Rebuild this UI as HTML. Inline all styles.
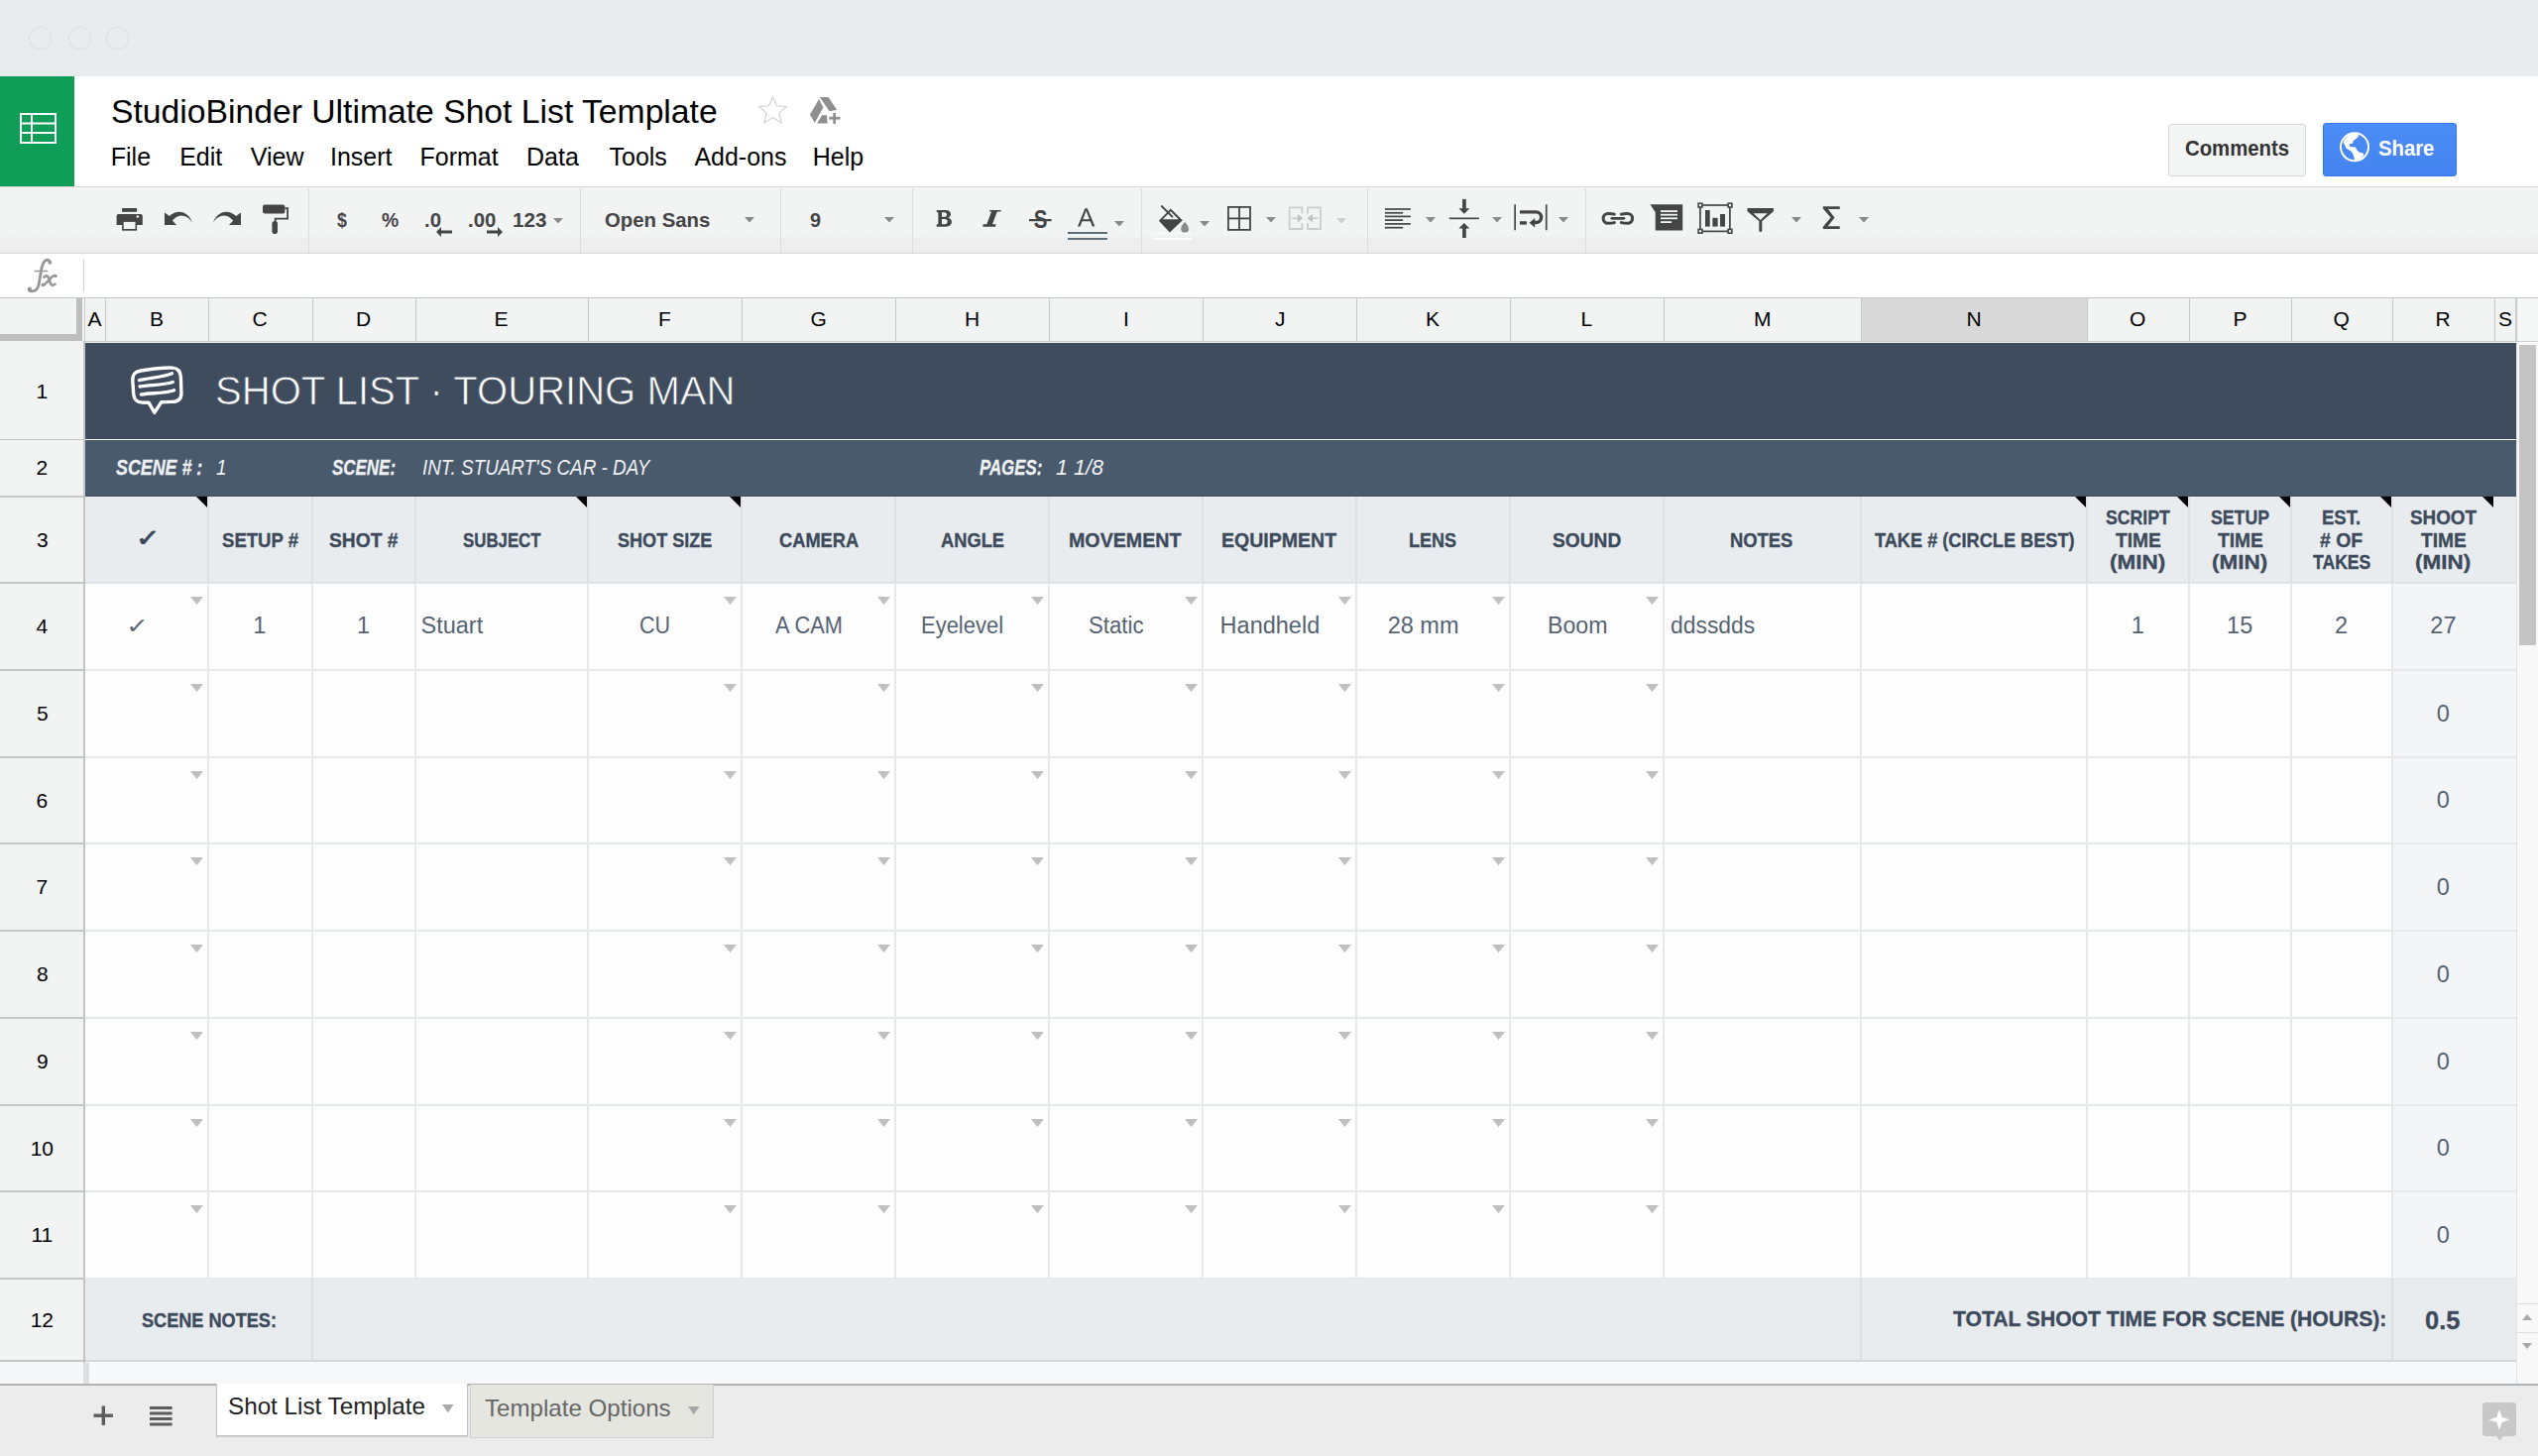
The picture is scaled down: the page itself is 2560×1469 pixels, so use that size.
<!DOCTYPE html><html><head><meta charset="utf-8"><style>*{margin:0;padding:0;box-sizing:border-box}
html,body{width:2560px;height:1469px;overflow:hidden;background:#fff}
body{position:relative;font-family:"Liberation Sans",sans-serif}
body>div,body>svg{position:absolute}
.t{white-space:nowrap;line-height:1}</style></head><body>
<div style="left:0px;top:0px;width:2560px;height:77px;background:#e9ecef"></div>
<div style="left:29px;top:27px;width:23px;height:23px;border:1px dotted #cfd3d6;border-radius:50%"></div>
<div style="left:69px;top:27px;width:23px;height:23px;border:1px dotted #cfd3d6;border-radius:50%"></div>
<div style="left:107px;top:27px;width:23px;height:23px;border:1px dotted #cfd3d6;border-radius:50%"></div>
<div style="left:0px;top:77px;width:75px;height:111px;background:#0f9d58"></div>
<svg style="left:20px;top:114px" width="37" height="31" viewBox="0 0 37 31"><g fill="none" stroke="#fff" stroke-width="2"><rect x="1" y="1" width="35" height="29"/><line x1="1" y1="10.5" x2="36" y2="10.5"/><line x1="1" y1="20" x2="36" y2="20"/><line x1="12" y1="1" x2="12" y2="30"/></g></svg>
<div class="t" style="left:112.00px;top:95.97px;font-size:33.7px;font-weight:normal;font-style:normal;color:#000;font-family:'Liberation Sans';">StudioBinder Ultimate Shot List Template</div>
<svg style="left:764px;top:96px" width="31" height="31" viewBox="0 0 24 24"><path d="M12 1.3l3.1 7 7.6.7-5.8 5 1.8 7.5L12 17.5l-6.7 4 1.8-7.5-5.8-5 7.6-.7z" fill="none" stroke="#cfcfcf" stroke-width="0.85"/></svg>
<svg style="left:816px;top:97px" width="33" height="30" viewBox="0 0 33 30"><g fill="#8f8f8f"><path d="M10.9 1.1h8.6l8.7 12.6-7.6 1.6z"/><path d="M10.1 3.1L14.4 11.4 5.7 27.1 1 18.5z"/><path d="M8.1 27.5L13.2 19.2H18L18.7 27.5z"/></g><g fill="#fff"><rect x="22.8" y="15.4" width="5.7" height="14"/><rect x="18.8" y="19.3" width="14" height="5.8"/></g><g fill="#8f8f8f"><rect x="24.3" y="16.9" width="2.7" height="11"/><rect x="20.3" y="20.8" width="11.1" height="2.8"/></g></svg>
<div class="t" style="left:111.80px;top:145.84px;font-size:25px;font-weight:normal;font-style:normal;color:#000;font-family:'Liberation Sans';">File</div>
<div class="t" style="left:181.20px;top:145.84px;font-size:25px;font-weight:normal;font-style:normal;color:#000;font-family:'Liberation Sans';">Edit</div>
<div class="t" style="left:252.80px;top:145.84px;font-size:25px;font-weight:normal;font-style:normal;color:#000;font-family:'Liberation Sans';">View</div>
<div class="t" style="left:333.00px;top:145.84px;font-size:25px;font-weight:normal;font-style:normal;color:#000;font-family:'Liberation Sans';">Insert</div>
<div class="t" style="left:423.50px;top:145.84px;font-size:25px;font-weight:normal;font-style:normal;color:#000;font-family:'Liberation Sans';">Format</div>
<div class="t" style="left:531.00px;top:145.84px;font-size:25px;font-weight:normal;font-style:normal;color:#000;font-family:'Liberation Sans';">Data</div>
<div class="t" style="left:614.50px;top:145.84px;font-size:25px;font-weight:normal;font-style:normal;color:#000;font-family:'Liberation Sans';">Tools</div>
<div class="t" style="left:700.40px;top:145.84px;font-size:25px;font-weight:normal;font-style:normal;color:#000;font-family:'Liberation Sans';">Add-ons</div>
<div class="t" style="left:819.70px;top:145.84px;font-size:25px;font-weight:normal;font-style:normal;color:#000;font-family:'Liberation Sans';">Help</div>
<div style="left:2187px;top:125px;width:139px;height:53px;background:#f3f4f4;border:1px solid #d6d6d6;border-radius:3px"></div>
<div class="t" style="left:2204.30px;top:138.75px;font-size:22.5px;font-weight:bold;font-style:normal;color:#333;font-family:'Liberation Sans';transform:scaleX(0.9036);transform-origin:0 0;">Comments</div>
<div style="left:2343px;top:124px;width:135px;height:54px;background:linear-gradient(#4b8cf6,#4584f0);border:1px solid #3079ed;border-radius:3px"></div>
<svg style="left:2360px;top:133px" width="30" height="31" viewBox="0 0 30 31"><circle cx="15" cy="15.3" r="14" fill="none" stroke="#fff" stroke-width="2"/><path d="M3.6 10.2 C5.5 5.5 10 2 15 1.6 C16.5 1.6 18 1.8 19.1 2.6 L18.3 5.5 L16 7.5 L13.5 9 L13.3 11.5 L10 12.2 L10 14.9 L15.8 15.6 L17.5 18.6 L19.5 20.4 L23.5 21.4 L24.4 23.6 C22 27 18.5 29.5 15.2 30 L14.9 27.6 L13.5 22.7 L11.9 19.9 L6.5 16.6 Z" fill="#fff"/></svg>
<div class="t" style="left:2399.30px;top:139.12px;font-size:22.3px;font-weight:bold;font-style:normal;color:#fff;font-family:'Liberation Sans';transform:scaleX(0.9095);transform-origin:0 0;">Share</div>
<div style="left:0px;top:188px;width:2560px;height:1px;background:#d8d8d8"></div>
<div style="left:0px;top:189px;width:2560px;height:66px;background:#f2f3f3"></div>
<div style="left:0px;top:240px;width:2560px;height:15px;background:#eeeeee"></div>
<div style="left:0px;top:238px;width:2560px;height:2px;background:repeating-linear-gradient(90deg,#f2f3f3 0 3px,#ececec 3px 5px);opacity:.8"></div>
<div style="left:0px;top:255px;width:2560px;height:1px;background:#d6d6d6"></div>
<div style="left:311px;top:190px;width:1px;height:65px;background:#dcdcdc"></div>
<div style="left:585px;top:190px;width:1px;height:65px;background:#dcdcdc"></div>
<div style="left:787px;top:190px;width:1px;height:65px;background:#dcdcdc"></div>
<div style="left:920px;top:190px;width:1px;height:65px;background:#dcdcdc"></div>
<div style="left:1151px;top:190px;width:1px;height:65px;background:#dcdcdc"></div>
<div style="left:1379px;top:190px;width:1px;height:65px;background:#dcdcdc"></div>
<div style="left:1599px;top:190px;width:1px;height:65px;background:#dcdcdc"></div>
<svg style="left:117px;top:209px" width="28" height="25" viewBox="0 0 28 25"><g fill="#454545"><rect x="6.1" y="1" width="15" height="3.8"/><path d="M2.6 6.9h22.2a2 2 0 0 1 2 2v9H0.6v-9a2 2 0 0 1 2-2z"/><rect x="6.1" y="13.2" width="15" height="10.5"/></g><rect x="7.7" y="14.9" width="11.8" height="7.1" fill="#f2f3f3"/><circle cx="21.9" cy="9.5" r="1.3" fill="#f2f3f3"/></svg>
<svg style="left:166px;top:213px" width="29" height="14" viewBox="0 0 29 14"><path d="M0 1.5V14h12L7.8 9.6C10.3 6.6 13.2 4.6 16.7 4.4c4.6-.1 9 2.8 11.3 7.3C25.8 5 20.5 0.8 15 0.8 11 0.8 7.5 2.5 4.9 5z" fill="#454545"/></svg>
<svg style="left:214px;top:213px" width="29" height="14" viewBox="0 0 29 14"><g transform="translate(29,0) scale(-1,1)"><path d="M0 1.5V14h12L7.8 9.6C10.3 6.6 13.2 4.6 16.7 4.4c4.6-.1 9 2.8 11.3 7.3C25.8 5 20.5 0.8 15 0.8 11 0.8 7.5 2.5 4.9 5z" fill="#454545"/></g></svg>
<svg style="left:265px;top:206px" width="28" height="31" viewBox="0 0 28 31"><g fill="#454545"><rect x="0" y="0.4" width="22.4" height="9.2" rx="2"/><path d="M22.4 3.2h3.6v12.4H13.6v2.2h-1.8v-4h12.4V5h-1.8z"/><rect x="9.4" y="17" width="5.6" height="13" rx="2.8"/></g></svg>
<div class="t" style="left:339.50px;top:211.02px;font-size:21px;font-weight:bold;font-style:normal;color:#454545;font-family:'Liberation Sans';transform:scaleX(0.8500);transform-origin:0 0;">$</div>
<div class="t" style="left:384.50px;top:211.02px;font-size:21px;font-weight:bold;font-style:normal;color:#454545;font-family:'Liberation Sans';transform:scaleX(0.9211);transform-origin:0 0;">%</div>
<div class="t" style="left:427.63px;top:211.02px;font-size:21px;font-weight:bold;font-style:normal;color:#454545;font-family:'Liberation Sans';transform:scaleX(0.9726);transform-origin:0 0;">.0</div>
<svg style="left:440px;top:229px" width="16" height="10" viewBox="0 0 16 10"><path d="M0 5L5 0v3.6h11v2.8H5V10z" fill="#454545"/></svg>
<div class="t" style="left:472.23px;top:211.02px;font-size:21px;font-weight:bold;font-style:normal;color:#454545;font-family:'Liberation Sans';transform:scaleX(0.9668);transform-origin:0 0;">.00</div>
<svg style="left:491px;top:229px" width="16" height="10" viewBox="0 0 16 10"><path d="M16 5L11 0v3.6H0v2.8h11V10z" fill="#454545"/></svg>
<div class="t" style="left:517.32px;top:211.02px;font-size:21px;font-weight:bold;font-style:normal;color:#454545;font-family:'Liberation Sans';transform:scaleX(0.9803);transform-origin:0 0;">123</div>
<svg style="left:558.2px;top:219.6px" width="10" height="5.6" viewBox="0 0 10 5.6"><path d="M0 0h10L5 5.6z" fill="#8a8a8a"/></svg>
<div class="t" style="left:610.20px;top:210.82px;font-size:21px;font-weight:bold;font-style:normal;color:#454545;font-family:'Liberation Sans';transform:scaleX(0.9687);transform-origin:0 0;">Open Sans</div>
<svg style="left:750.6px;top:219.4px" width="10" height="5.6" viewBox="0 0 10 5.6"><path d="M0 0h10L5 5.6z" fill="#8a8a8a"/></svg>
<div class="t" style="left:817.20px;top:210.82px;font-size:21px;font-weight:bold;font-style:normal;color:#454545;font-family:'Liberation Sans';transform:scaleX(0.9455);transform-origin:0 0;">9</div>
<svg style="left:892.3px;top:219.4px" width="10" height="5.6" viewBox="0 0 10 5.6"><path d="M0 0h10L5 5.6z" fill="#8a8a8a"/></svg>
<svg style="left:944px;top:211px" width="17" height="19" viewBox="0 0 17 19"><path d="M0.8 0.9h8.6c3.6 0 5.6 1.5 5.6 4.2 0 1.8-1 3-2.6 3.6 2.1.5 3.5 1.9 3.5 4.1 0 3-2.3 4.9-6.2 4.9H0.8v-2.4h1.6V3.3H0.8z M6 3.3v4.5h2.6c1.5 0 2.4-.8 2.4-2.3 0-1.4-.9-2.2-2.4-2.2z M6 10.1v5.1h3c1.7 0 2.7-.9 2.7-2.6 0-1.6-1-2.5-2.7-2.5z" fill="#454545" fill-rule="evenodd"/></svg>
<svg style="left:991px;top:211px" width="20" height="19" viewBox="0 0 20 19"><path d="M7.4 0.9h11.3l-.4 1.7h-3.5L10 15.3h3.5l-.4 2.5H0.3l.4-2.5h3.6L9.1 2.6H7z" fill="#454545"/></svg>
<svg style="left:1038px;top:210px" width="24" height="23" viewBox="0 0 24 23"><text x="11.6" y="20" font-family="Liberation Sans" font-weight="bold" font-size="25" fill="#454545" text-anchor="middle" transform="translate(11.6,0) scale(0.82,1) translate(-11.6,0)">S</text><rect x="0" y="11" width="22.6" height="2.2" fill="#454545"/></svg>
<svg style="left:1086px;top:210px" width="20" height="19" viewBox="0 0 20 19"><path d="M1 18.6L8.4 0.2h2.4l7.6 18.4h-2.6l-2.1-5.3H5.5l-2 5.3z M6.3 11.2h6.6L9.6 2.8z" fill="#454545" fill-rule="evenodd"/></svg>
<div style="left:1077px;top:234.4px;width:39.5px;height:1.8px;background:#5f6e7c"></div>
<div style="left:1077px;top:240px;width:39.5px;height:1.8px;background:#5f6e7c"></div>
<svg style="left:1123.9px;top:223.2px" width="10" height="5.6" viewBox="0 0 10 5.6"><path d="M0 0h10L5 5.6z" fill="#8a8a8a"/></svg>
<svg style="left:1163px;top:207px" width="40" height="36" viewBox="0 0 40 36"><g fill="#454545"><path d="M8.9 1.1L19.4 11.6" stroke="#454545" stroke-width="2" stroke-linecap="round"/><path d="M17.8 3.4L29.8 15.3 16.9 27.6 5.9 15.7z M17.8 6.3L25.8 14.3H9.8z" fill-rule="evenodd"/></g><path d="M32.1 16.8c0 0-3.9 4.3-3.9 6.9a3.9 3.9 0 0 0 7.8 0c0-2.6-3.9-6.9-3.9-6.9z" fill="#8a8a8a"/><rect x="0.4" y="27.9" width="38.6" height="0.9" fill="#fff"/><rect x="0.4" y="33" width="38.6" height="1.8" fill="#fff"/></svg>
<svg style="left:1209.8px;top:223.2px" width="10" height="5.6" viewBox="0 0 10 5.6"><path d="M0 0h10L5 5.6z" fill="#8a8a8a"/></svg>
<svg style="left:1238px;top:208px" width="24" height="25" viewBox="0 0 24 25"><g fill="none" stroke="#454545" stroke-width="1.8"><rect x="0.9" y="0.9" width="22.1" height="23"/><line x1="12" y1="0.9" x2="12" y2="23.9"/><line x1="0.9" y1="12.4" x2="23" y2="12.4"/></g></svg>
<svg style="left:1277px;top:219.3px" width="10" height="5.6" viewBox="0 0 10 5.6"><path d="M0 0h10L5 5.6z" fill="#8a8a8a"/></svg>
<svg style="left:1299px;top:208px" width="35" height="25" viewBox="0 0 35 25"><g fill="none" stroke="#cdcdcd" stroke-width="1.8"><path d="M14.4 7.5V1.3H1.7V23H14.4V17.2"/><path d="M20.1 7.5V1.3H33V23H20.1V17.2"/></g><g fill="#c0c0c0"><rect x="4.2" y="11.6" width="6" height="1.3"/><path d="M9.9 7.9L15.1 12.2 9.9 16.6z"/><rect x="24.6" y="11.6" width="5.7" height="1.3"/><path d="M24.9 7.9L19.7 12.2 24.9 16.6z"/></g></svg>
<svg style="left:1348px;top:219.7px" width="10" height="5.6" viewBox="0 0 10 5.6"><path d="M0 0h10L5 5.6z" fill="#cfcfcf"/></svg>
<svg style="left:1396px;top:209px" width="28" height="23" viewBox="0 0 28 23"><g fill="#454545"><rect x="0.9" y="1.15" width="26" height="1.7"/><rect x="0.9" y="4.95" width="18.2" height="1.7"/><rect x="0.9" y="8.55" width="26" height="1.7"/><rect x="0.9" y="12.25" width="18.2" height="1.7"/><rect x="0.9" y="16.05" width="26" height="1.7"/><rect x="0.9" y="19.85" width="18.2" height="1.7"/></g></svg>
<svg style="left:1437.6px;top:219.3px" width="10" height="5.6" viewBox="0 0 10 5.6"><path d="M0 0h10L5 5.6z" fill="#8a8a8a"/></svg>
<svg style="left:1461px;top:200px" width="32" height="41" viewBox="0 0 32 41"><g fill="#454545"><rect x="0.9" y="19.5" width="29.9" height="1.7"/><rect x="14.1" y="0.9" width="3.7" height="10"/><path d="M10.4 10.2h11l-5.5 5.6z"/><rect x="14.1" y="30" width="3.7" height="10"/><path d="M10.4 30.5h11l-5.5-5.6z"/></g></svg>
<svg style="left:1504.8px;top:219.3px" width="10" height="5.6" viewBox="0 0 10 5.6"><path d="M0 0h10L5 5.6z" fill="#8a8a8a"/></svg>
<svg style="left:1527px;top:206px" width="35" height="27" viewBox="0 0 35 27"><g fill="#454545"><rect x="0.3" y="0.3" width="1.7" height="26"/><rect x="31.9" y="0.3" width="1.7" height="26"/><rect x="6" y="17.2" width="6.9" height="3.4"/><path d="M6 6.2h16.3a7 7 0 0 1 0 14H21v-3.4h1.3a3.6 3.6 0 0 0 0-7.2H6z"/><path d="M15.5 18.8L21.2 14v9.6z"/></g></svg>
<svg style="left:1572px;top:219.3px" width="10" height="5.6" viewBox="0 0 10 5.6"><path d="M0 0h10L5 5.6z" fill="#8a8a8a"/></svg>
<svg style="left:1614px;top:213px" width="36" height="15" viewBox="0 0 36 15"><g fill="none" stroke="#454545" stroke-width="3.1" stroke-linecap="round"><path d="M14.3 3.1C12.8 2.6 11 2.45 8 2.45A4.9 4.9 0 0 0 8 12.25C11 12.25 12.8 12.1 14.3 11.6"/><path d="M21.4 3.1C22.9 2.6 24.7 2.45 27.7 2.45A4.9 4.9 0 0 1 27.7 12.25C24.7 12.25 22.9 12.1 21.4 11.6"/></g><rect x="10.4" y="6" width="14.9" height="2.7" rx="1.35" fill="#454545"/></svg>
<svg style="left:1664px;top:206px" width="34" height="27" viewBox="0 0 34 27"><path d="M0.4 0.2h32.8v26.4H5.7V8z" fill="#454545"/><g fill="#f2f3f3"><rect x="11" y="6.2" width="17" height="1.8"/><rect x="11" y="9.8" width="17" height="1.8"/><rect x="11" y="13.4" width="17" height="1.8"/><rect x="11" y="17.2" width="11" height="1.8"/></g></svg>
<svg style="left:1712px;top:204px" width="37" height="33" viewBox="0 0 37 33"><g fill="none" stroke="#454545" stroke-width="1.7"><rect x="2.9" y="3" width="30" height="26.4"/></g><g fill="#454545"><rect x="0.3" y="0.4" width="5.4" height="5.4"/><rect x="30.3" y="0.4" width="5.4" height="5.4"/><rect x="0.3" y="26.6" width="5.4" height="5.4"/><rect x="30.3" y="26.6" width="5.4" height="5.4"/><rect x="8" y="8" width="4.7" height="16.6"/><rect x="15.4" y="15.8" width="5.2" height="8.8"/><rect x="23" y="12" width="5" height="12.6"/></g><g fill="#f2f3f3"><rect x="1.9" y="2" width="2.2" height="2.2"/><rect x="31.9" y="2" width="2.2" height="2.2"/><rect x="1.9" y="28.2" width="2.2" height="2.2"/><rect x="31.9" y="28.2" width="2.2" height="2.2"/></g></svg>
<svg style="left:1762px;top:210px" width="28" height="24" viewBox="0 0 28 24"><path d="M0.5 0.1h26.4v3.2L15.3 13v9.4a1.5 1.5 0 0 1-3 0V13L0.5 3.3z M6.6 5.2l7.1 6.7 7.1-6.7z" fill="#454545" fill-rule="evenodd"/></svg>
<svg style="left:1807.4px;top:219.2px" width="10" height="5.6" viewBox="0 0 10 5.6"><path d="M0 0h10L5 5.6z" fill="#8a8a8a"/></svg>
<svg style="left:1838px;top:208px" width="19" height="23" viewBox="0 0 19 23"><path d="M0.8 0.2h16.9v2.8H5.9l6.6 8.4-6.8 8.8h12v2.8H0.8v-2.2l7.8-9.4L0.8 2.4z" fill="#454545"/></svg>
<svg style="left:1874.8px;top:219.2px" width="10" height="5.6" viewBox="0 0 10 5.6"><path d="M0 0h10L5 5.6z" fill="#8a8a8a"/></svg>
<svg style="left:20px;top:256px" width="40" height="44" viewBox="0 0 40 44"><g fill="none" stroke="#979797" stroke-linecap="round"><path stroke-width="2.8" d="M30.6 8.6C30.2 6.4 28.2 5.8 26.3 6.6 23.3 7.9 22.3 12.2 21.4 17.5L19.3 30.2C18.4 35 15.8 37.9 12.2 37.9 9.8 37.9 8.7 36.6 9.3 35.6"/><path stroke-width="1.5" d="M15.2 17.6H27.6"/><path stroke-width="2.6" d="M24.4 23.6C26.4 21.8 28.2 22.1 28.9 24L31 30.1C31.6 32 33.6 32.4 35.6 30.6"/><path stroke-width="2.4" d="M36.3 22.3C34.9 21.6 33.5 22.2 32.1 23.6L25.6 30.6C24.6 31.8 23.7 32 23 31.5"/></g><g fill="#979797"><circle cx="30.3" cy="8.8" r="1.9"/><circle cx="9.9" cy="35.6" r="2.1"/><circle cx="36" cy="22.4" r="1.6"/><circle cx="23.3" cy="31.2" r="1.7"/></g></svg>
<div style="left:84px;top:262px;width:1px;height:32px;background:#cfcfcf"></div>
<div style="left:0px;top:300px;width:2560px;height:1px;background:#c6c6c6"></div>
<div style="left:0px;top:301px;width:2538px;height:44px;background:#f2f3f3"></div>
<div style="left:2538px;top:301px;width:22px;height:44px;background:#f5f6f6"></div>
<div style="left:2538px;top:344px;width:22px;height:1px;background:#d0d0d0"></div>
<div style="left:2536.5px;top:301px;width:2px;height:44px;background:#cfcfcf"></div>
<div style="left:1877px;top:301px;width:228px;height:44px;background:#d9d9d9"></div>
<div style="left:105.5px;top:301px;width:1px;height:44px;background:#c8c8c8"></div>
<div class="t" style="left:88.50px;top:311.32px;font-size:21px;font-weight:normal;font-style:normal;color:#000;font-family:'Liberation Sans';">A</div>
<div style="left:209.5px;top:301px;width:1px;height:44px;background:#c8c8c8"></div>
<div class="t" style="left:151.00px;top:311.32px;font-size:21px;font-weight:normal;font-style:normal;color:#000;font-family:'Liberation Sans';">B</div>
<div style="left:314.5px;top:301px;width:1px;height:44px;background:#c8c8c8"></div>
<div class="t" style="left:254.50px;top:311.32px;font-size:21px;font-weight:normal;font-style:normal;color:#000;font-family:'Liberation Sans';">C</div>
<div style="left:418.5px;top:301px;width:1px;height:44px;background:#c8c8c8"></div>
<div class="t" style="left:359.00px;top:311.32px;font-size:21px;font-weight:normal;font-style:normal;color:#000;font-family:'Liberation Sans';">D</div>
<div style="left:592.5px;top:301px;width:1px;height:44px;background:#c8c8c8"></div>
<div class="t" style="left:498.50px;top:311.32px;font-size:21px;font-weight:normal;font-style:normal;color:#000;font-family:'Liberation Sans';">E</div>
<div style="left:747.5px;top:301px;width:1px;height:44px;background:#c8c8c8"></div>
<div class="t" style="left:664.00px;top:311.32px;font-size:21px;font-weight:normal;font-style:normal;color:#000;font-family:'Liberation Sans';">F</div>
<div style="left:902.5px;top:301px;width:1px;height:44px;background:#c8c8c8"></div>
<div class="t" style="left:817.50px;top:311.32px;font-size:21px;font-weight:normal;font-style:normal;color:#000;font-family:'Liberation Sans';">G</div>
<div style="left:1057.5px;top:301px;width:1px;height:44px;background:#c8c8c8"></div>
<div class="t" style="left:973.00px;top:311.32px;font-size:21px;font-weight:normal;font-style:normal;color:#000;font-family:'Liberation Sans';">H</div>
<div style="left:1212.5px;top:301px;width:1px;height:44px;background:#c8c8c8"></div>
<div class="t" style="left:1133.00px;top:311.32px;font-size:21px;font-weight:normal;font-style:normal;color:#000;font-family:'Liberation Sans';">I</div>
<div style="left:1367.5px;top:301px;width:1px;height:44px;background:#c8c8c8"></div>
<div class="t" style="left:1286.00px;top:311.32px;font-size:21px;font-weight:normal;font-style:normal;color:#000;font-family:'Liberation Sans';">J</div>
<div style="left:1522.5px;top:301px;width:1px;height:44px;background:#c8c8c8"></div>
<div class="t" style="left:1438.00px;top:311.32px;font-size:21px;font-weight:normal;font-style:normal;color:#000;font-family:'Liberation Sans';">K</div>
<div style="left:1677.5px;top:301px;width:1px;height:44px;background:#c8c8c8"></div>
<div class="t" style="left:1594.50px;top:311.32px;font-size:21px;font-weight:normal;font-style:normal;color:#000;font-family:'Liberation Sans';">L</div>
<div style="left:1876.5px;top:301px;width:1px;height:44px;background:#c8c8c8"></div>
<div class="t" style="left:1769.00px;top:311.32px;font-size:21px;font-weight:normal;font-style:normal;color:#000;font-family:'Liberation Sans';">M</div>
<div style="left:2104.5px;top:301px;width:1px;height:44px;background:#c8c8c8"></div>
<div class="t" style="left:1983.50px;top:311.32px;font-size:21px;font-weight:normal;font-style:normal;color:#000;font-family:'Liberation Sans';">N</div>
<div style="left:2207.5px;top:301px;width:1px;height:44px;background:#c8c8c8"></div>
<div class="t" style="left:2148.00px;top:311.32px;font-size:21px;font-weight:normal;font-style:normal;color:#000;font-family:'Liberation Sans';">O</div>
<div style="left:2310.5px;top:301px;width:1px;height:44px;background:#c8c8c8"></div>
<div class="t" style="left:2252.50px;top:311.32px;font-size:21px;font-weight:normal;font-style:normal;color:#000;font-family:'Liberation Sans';">P</div>
<div style="left:2412.5px;top:301px;width:1px;height:44px;background:#c8c8c8"></div>
<div class="t" style="left:2353.50px;top:311.32px;font-size:21px;font-weight:normal;font-style:normal;color:#000;font-family:'Liberation Sans';">Q</div>
<div style="left:2515.5px;top:301px;width:1px;height:44px;background:#c8c8c8"></div>
<div class="t" style="left:2456.50px;top:311.32px;font-size:21px;font-weight:normal;font-style:normal;color:#000;font-family:'Liberation Sans';">R</div>
<div style="left:2537.5px;top:301px;width:1px;height:44px;background:#c8c8c8"></div>
<div class="t" style="left:2520.00px;top:311.32px;font-size:21px;font-weight:normal;font-style:normal;color:#000;font-family:'Liberation Sans';">S</div>
<div style="left:84.5px;top:301px;width:1px;height:44px;background:#c8c8c8"></div>
<div style="left:0px;top:301px;width:77px;height:36px;background:#f2f3f3"></div>
<div style="left:77px;top:301px;width:6px;height:43px;background:#bebebe"></div>
<div style="left:0px;top:337px;width:83px;height:7px;background:#bebebe"></div>
<div style="left:0px;top:344px;width:2538px;height:1px;background:#c8c8c8"></div>
<div style="left:85px;top:345px;width:2453px;height:1px;background:#f4f4f4"></div>
<div style="left:0px;top:344px;width:85px;height:1052px;background:#f2f3f3"></div>
<div style="left:84px;top:344px;width:1.5px;height:1052px;background:#c4c4c4"></div>
<div style="left:0px;top:442.5px;width:84px;height:1.5px;background:#c6c6c6"></div>
<div class="t" style="left:36.50px;top:383.97px;font-size:21px;font-weight:normal;font-style:normal;color:#000;font-family:'Liberation Sans';">1</div>
<div style="left:0px;top:500px;width:84px;height:1.5px;background:#c6c6c6"></div>
<div class="t" style="left:36.50px;top:461.47px;font-size:21px;font-weight:normal;font-style:normal;color:#000;font-family:'Liberation Sans';">2</div>
<div style="left:0px;top:587px;width:84px;height:1.5px;background:#c6c6c6"></div>
<div class="t" style="left:37.00px;top:533.72px;font-size:21px;font-weight:normal;font-style:normal;color:#000;font-family:'Liberation Sans';">3</div>
<div style="left:0px;top:675px;width:84px;height:1.5px;background:#c6c6c6"></div>
<div class="t" style="left:36.50px;top:621.22px;font-size:21px;font-weight:normal;font-style:normal;color:#000;font-family:'Liberation Sans';">4</div>
<div style="left:0px;top:763px;width:84px;height:1.5px;background:#c6c6c6"></div>
<div class="t" style="left:37.00px;top:709.22px;font-size:21px;font-weight:normal;font-style:normal;color:#000;font-family:'Liberation Sans';">5</div>
<div style="left:0px;top:850px;width:84px;height:1.5px;background:#c6c6c6"></div>
<div class="t" style="left:36.50px;top:796.72px;font-size:21px;font-weight:normal;font-style:normal;color:#000;font-family:'Liberation Sans';">6</div>
<div style="left:0px;top:938px;width:84px;height:1.5px;background:#c6c6c6"></div>
<div class="t" style="left:36.50px;top:884.22px;font-size:21px;font-weight:normal;font-style:normal;color:#000;font-family:'Liberation Sans';">7</div>
<div style="left:0px;top:1026px;width:84px;height:1.5px;background:#c6c6c6"></div>
<div class="t" style="left:37.00px;top:972.22px;font-size:21px;font-weight:normal;font-style:normal;color:#000;font-family:'Liberation Sans';">8</div>
<div style="left:0px;top:1114px;width:84px;height:1.5px;background:#c6c6c6"></div>
<div class="t" style="left:37.00px;top:1060.22px;font-size:21px;font-weight:normal;font-style:normal;color:#000;font-family:'Liberation Sans';">9</div>
<div style="left:0px;top:1201px;width:84px;height:1.5px;background:#c6c6c6"></div>
<div class="t" style="left:30.66px;top:1147.72px;font-size:21px;font-weight:normal;font-style:normal;color:#000;font-family:'Liberation Sans';">10</div>
<div style="left:0px;top:1289px;width:84px;height:1.5px;background:#c6c6c6"></div>
<div class="t" style="left:31.44px;top:1235.22px;font-size:21px;font-weight:normal;font-style:normal;color:#000;font-family:'Liberation Sans';">11</div>
<div style="left:0px;top:1372px;width:84px;height:1.5px;background:#c6c6c6"></div>
<div class="t" style="left:30.66px;top:1320.72px;font-size:21px;font-weight:normal;font-style:normal;color:#000;font-family:'Liberation Sans';">12</div>
<div style="left:85.5px;top:346px;width:2452.5px;height:97px;background:#3e4c5d"></div>
<div style="left:85.5px;top:443.7px;width:2452.5px;height:57.3px;background:#4a5a6d"></div>
<div style="left:85.5px;top:500px;width:2452.5px;height:1px;background:#3f4b5a"></div>
<svg style="left:120px;top:355px" width="80" height="70" viewBox="0 0 80 70"><g fill="none" stroke="#fff" stroke-linejoin="round" stroke-linecap="round"><path stroke-width="3.4" d="M22 19C33 17.2 44 15.8 54 16.1 59.5 16.4 62 19.4 62.4 25.5L62.9 42C63 47.6 59.6 50.2 53.5 50.4L42.6 50.8 35.8 61.4 30 51.2 23.5 51.1C17.5 51 15.2 47.6 14.7 42.6L13.8 29C13.5 22.5 16 20 22 19Z"/><path stroke-width="3.3" d="M20.4 28.6C31.5 26 44 25.8 53.5 21.8"/><path stroke-width="3.3" d="M21 35C32.5 33.2 45 33.6 54.3 30.5"/><path stroke-width="3.3" d="M22.4 43C34 41.2 46 42.2 55.6 38.7"/></g></svg>
<div class="t" style="left:217.02px;top:373.59px;font-size:41px;font-weight:normal;font-style:normal;color:#ffffff;font-family:'Liberation Sans';transform:scaleX(0.9767);transform-origin:0 0;-webkit-text-stroke:0.75px #3e4c5d">SHOT LIST &middot; TOURING MAN</div>
<div class="t" style="left:117.00px;top:460.88px;font-size:22px;font-weight:bold;font-style:italic;color:#f0f1f3;font-family:'Liberation Sans';transform:scaleX(0.8111);transform-origin:0 0;-webkit-text-stroke:0.3px #f0f1f3">SCENE # :</div>
<div class="t" style="left:218.20px;top:460.88px;font-size:22px;font-weight:normal;font-style:italic;color:#f0f1f3;font-family:'Liberation Sans';transform:scaleX(0.8636);transform-origin:0 0;">1</div>
<div class="t" style="left:335.20px;top:460.88px;font-size:22px;font-weight:bold;font-style:italic;color:#f0f1f3;font-family:'Liberation Sans';transform:scaleX(0.7706);transform-origin:0 0;-webkit-text-stroke:0.3px #f0f1f3">SCENE:</div>
<div class="t" style="left:426.20px;top:460.88px;font-size:22px;font-weight:normal;font-style:italic;color:#f0f1f3;font-family:'Liberation Sans';transform:scaleX(0.8564);transform-origin:0 0;">INT. STUART&#39;S CAR - DAY</div>
<div class="t" style="left:987.80px;top:460.88px;font-size:22px;font-weight:bold;font-style:italic;color:#f0f1f3;font-family:'Liberation Sans';transform:scaleX(0.7647);transform-origin:0 0;-webkit-text-stroke:0.3px #f0f1f3">PAGES:</div>
<div class="t" style="left:1065.00px;top:460.88px;font-size:22px;font-weight:normal;font-style:italic;color:#f0f1f3;font-family:'Liberation Sans';transform:scaleX(0.9820);transform-origin:0 0;">1 1/8</div>
<div style="left:85.5px;top:501px;width:2452.5px;height:87px;background:#e9ecef"></div>
<div style="left:85.5px;top:588px;width:2452.5px;height:702px;background:#fefefe"></div>
<div style="left:2413px;top:588px;width:125px;height:702px;background:#f4f5f7"></div>
<div style="left:85.5px;top:1290px;width:2452.5px;height:83px;background:#e9ecef"></div>
<div style="left:85.5px;top:1373px;width:2452.5px;height:23px;background:#f7f8fa"></div>
<div style="left:209px;top:501px;width:2px;height:87px;background:#dde1e5"></div>
<div style="left:209px;top:588px;width:2px;height:702px;background:#e6e9ec"></div>
<div style="left:314px;top:501px;width:2px;height:87px;background:#dde1e5"></div>
<div style="left:314px;top:588px;width:2px;height:702px;background:#e6e9ec"></div>
<div style="left:418px;top:501px;width:2px;height:87px;background:#dde1e5"></div>
<div style="left:418px;top:588px;width:2px;height:702px;background:#e6e9ec"></div>
<div style="left:592px;top:501px;width:2px;height:87px;background:#dde1e5"></div>
<div style="left:592px;top:588px;width:2px;height:702px;background:#e6e9ec"></div>
<div style="left:747px;top:501px;width:2px;height:87px;background:#dde1e5"></div>
<div style="left:747px;top:588px;width:2px;height:702px;background:#e6e9ec"></div>
<div style="left:902px;top:501px;width:2px;height:87px;background:#dde1e5"></div>
<div style="left:902px;top:588px;width:2px;height:702px;background:#e6e9ec"></div>
<div style="left:1057px;top:501px;width:2px;height:87px;background:#dde1e5"></div>
<div style="left:1057px;top:588px;width:2px;height:702px;background:#e6e9ec"></div>
<div style="left:1212px;top:501px;width:2px;height:87px;background:#dde1e5"></div>
<div style="left:1212px;top:588px;width:2px;height:702px;background:#e6e9ec"></div>
<div style="left:1367px;top:501px;width:2px;height:87px;background:#dde1e5"></div>
<div style="left:1367px;top:588px;width:2px;height:702px;background:#e6e9ec"></div>
<div style="left:1522px;top:501px;width:2px;height:87px;background:#dde1e5"></div>
<div style="left:1522px;top:588px;width:2px;height:702px;background:#e6e9ec"></div>
<div style="left:1677px;top:501px;width:2px;height:87px;background:#dde1e5"></div>
<div style="left:1677px;top:588px;width:2px;height:702px;background:#e6e9ec"></div>
<div style="left:1876px;top:501px;width:2px;height:87px;background:#dde1e5"></div>
<div style="left:1876px;top:588px;width:2px;height:702px;background:#e6e9ec"></div>
<div style="left:2104px;top:501px;width:2px;height:87px;background:#dde1e5"></div>
<div style="left:2104px;top:588px;width:2px;height:702px;background:#e6e9ec"></div>
<div style="left:2207px;top:501px;width:2px;height:87px;background:#dde1e5"></div>
<div style="left:2207px;top:588px;width:2px;height:702px;background:#e6e9ec"></div>
<div style="left:2310px;top:501px;width:2px;height:87px;background:#dde1e5"></div>
<div style="left:2310px;top:588px;width:2px;height:702px;background:#e6e9ec"></div>
<div style="left:2412px;top:501px;width:2px;height:87px;background:#dde1e5"></div>
<div style="left:2412px;top:588px;width:2px;height:702px;background:#e6e9ec"></div>
<div style="left:85.5px;top:587px;width:2452.5px;height:2px;background:#dfe3e7"></div>
<div style="left:85.5px;top:675px;width:2452.5px;height:2px;background:#e6e9ec"></div>
<div style="left:85.5px;top:763px;width:2452.5px;height:2px;background:#e6e9ec"></div>
<div style="left:85.5px;top:850px;width:2452.5px;height:2px;background:#e6e9ec"></div>
<div style="left:85.5px;top:938px;width:2452.5px;height:2px;background:#e6e9ec"></div>
<div style="left:85.5px;top:1026px;width:2452.5px;height:2px;background:#e6e9ec"></div>
<div style="left:85.5px;top:1114px;width:2452.5px;height:2px;background:#e6e9ec"></div>
<div style="left:85.5px;top:1201px;width:2452.5px;height:2px;background:#e6e9ec"></div>
<div style="left:85.5px;top:1289px;width:2452.5px;height:2px;background:#e6e9ec"></div>
<div style="left:85.5px;top:1372px;width:2452.5px;height:2px;background:#d3d7db"></div>
<div style="left:314px;top:1290px;width:2px;height:83px;background:#dce0e4"></div>
<div style="left:1876px;top:1290px;width:2px;height:83px;background:#dce0e4"></div>
<div style="left:2412px;top:1290px;width:2px;height:83px;background:#dce0e4"></div>
<div style="left:0px;top:1374.5px;width:84px;height:21.5px;background:#f6f7f8"></div>
<div style="left:84px;top:1374.5px;width:5.5px;height:21.5px;background:#dde0e3"></div>
<div class="t" style="left:223.65px;top:534.02px;font-size:21px;font-weight:bold;font-style:normal;color:#3c4a5b;font-family:'Liberation Sans';transform:scaleX(0.8845);transform-origin:0 0;-webkit-text-stroke:0.35px #3c4a5b">SETUP #</div>
<div class="t" style="left:332.10px;top:534.02px;font-size:21px;font-weight:bold;font-style:normal;color:#3c4a5b;font-family:'Liberation Sans';transform:scaleX(0.9164);transform-origin:0 0;-webkit-text-stroke:0.35px #3c4a5b">SHOT #</div>
<div class="t" style="left:466.65px;top:534.02px;font-size:21px;font-weight:bold;font-style:normal;color:#3c4a5b;font-family:'Liberation Sans';transform:scaleX(0.8015);transform-origin:0 0;-webkit-text-stroke:0.35px #3c4a5b">SUBJECT</div>
<div class="t" style="left:622.80px;top:534.02px;font-size:21px;font-weight:bold;font-style:normal;color:#3c4a5b;font-family:'Liberation Sans';transform:scaleX(0.8607);transform-origin:0 0;-webkit-text-stroke:0.35px #3c4a5b">SHOT SIZE</div>
<div class="t" style="left:785.50px;top:534.02px;font-size:21px;font-weight:bold;font-style:normal;color:#3c4a5b;font-family:'Liberation Sans';transform:scaleX(0.8696);transform-origin:0 0;-webkit-text-stroke:0.35px #3c4a5b">CAMERA</div>
<div class="t" style="left:948.50px;top:534.02px;font-size:21px;font-weight:bold;font-style:normal;color:#3c4a5b;font-family:'Liberation Sans';transform:scaleX(0.8708);transform-origin:0 0;-webkit-text-stroke:0.35px #3c4a5b">ANGLE</div>
<div class="t" style="left:1078.21px;top:534.02px;font-size:21px;font-weight:bold;font-style:normal;color:#3c4a5b;font-family:'Liberation Sans';transform:scaleX(0.9352);transform-origin:0 0;-webkit-text-stroke:0.35px #3c4a5b">MOVEMENT</div>
<div class="t" style="left:1231.92px;top:534.02px;font-size:21px;font-weight:bold;font-style:normal;color:#3c4a5b;font-family:'Liberation Sans';transform:scaleX(0.9297);transform-origin:0 0;-webkit-text-stroke:0.35px #3c4a5b">EQUIPMENT</div>
<div class="t" style="left:1421.04px;top:534.02px;font-size:21px;font-weight:bold;font-style:normal;color:#3c4a5b;font-family:'Liberation Sans';transform:scaleX(0.8582);transform-origin:0 0;-webkit-text-stroke:0.35px #3c4a5b">LENS</div>
<div class="t" style="left:1565.95px;top:534.02px;font-size:21px;font-weight:bold;font-style:normal;color:#3c4a5b;font-family:'Liberation Sans';transform:scaleX(0.9131);transform-origin:0 0;-webkit-text-stroke:0.35px #3c4a5b">SOUND</div>
<div class="t" style="left:1745.37px;top:534.02px;font-size:21px;font-weight:bold;font-style:normal;color:#3c4a5b;font-family:'Liberation Sans';transform:scaleX(0.8762);transform-origin:0 0;-webkit-text-stroke:0.35px #3c4a5b">NOTES</div>
<div class="t" style="left:1890.65px;top:534.02px;font-size:21px;font-weight:bold;font-style:normal;color:#3c4a5b;font-family:'Liberation Sans';transform:scaleX(0.8653);transform-origin:0 0;-webkit-text-stroke:0.35px #3c4a5b">TAKE # (CIRCLE BEST)</div>
<div class="t" style="left:137.36px;top:531.28px;font-size:24px;font-weight:bold;font-style:normal;color:#3c4a5b;font-family:'Liberation Sans';transform:scaleX(1.2143);transform-origin:0 0;">&#10003;</div>
<div class="t" style="left:2124.00px;top:511.42px;font-size:21px;font-weight:bold;font-style:normal;color:#3c4a5b;font-family:'Liberation Sans';transform:scaleX(0.8422);transform-origin:0 0;-webkit-text-stroke:0.35px #3c4a5b">SCRIPT</div>
<div class="t" style="left:2133.60px;top:533.82px;font-size:21px;font-weight:bold;font-style:normal;color:#3c4a5b;font-family:'Liberation Sans';transform:scaleX(0.9132);transform-origin:0 0;-webkit-text-stroke:0.35px #3c4a5b">TIME</div>
<div class="t" style="left:2128.43px;top:556.22px;font-size:21px;font-weight:bold;font-style:normal;color:#3c4a5b;font-family:'Liberation Sans';transform:scaleX(1.0696);transform-origin:0 0;-webkit-text-stroke:0.35px #3c4a5b">(MIN)</div>
<div class="t" style="left:2230.00px;top:511.42px;font-size:21px;font-weight:bold;font-style:normal;color:#3c4a5b;font-family:'Liberation Sans';transform:scaleX(0.8428);transform-origin:0 0;-webkit-text-stroke:0.35px #3c4a5b">SETUP</div>
<div class="t" style="left:2236.60px;top:533.82px;font-size:21px;font-weight:bold;font-style:normal;color:#3c4a5b;font-family:'Liberation Sans';transform:scaleX(0.9132);transform-origin:0 0;-webkit-text-stroke:0.35px #3c4a5b">TIME</div>
<div class="t" style="left:2231.43px;top:556.22px;font-size:21px;font-weight:bold;font-style:normal;color:#3c4a5b;font-family:'Liberation Sans';transform:scaleX(1.0696);transform-origin:0 0;-webkit-text-stroke:0.35px #3c4a5b">(MIN)</div>
<div class="t" style="left:2342.42px;top:511.42px;font-size:21px;font-weight:bold;font-style:normal;color:#3c4a5b;font-family:'Liberation Sans';transform:scaleX(0.8797);transform-origin:0 0;-webkit-text-stroke:0.35px #3c4a5b">EST.</div>
<div class="t" style="left:2340.30px;top:533.82px;font-size:21px;font-weight:bold;font-style:normal;color:#3c4a5b;font-family:'Liberation Sans';transform:scaleX(0.9264);transform-origin:0 0;-webkit-text-stroke:0.35px #3c4a5b"># OF</div>
<div class="t" style="left:2332.85px;top:556.22px;font-size:21px;font-weight:bold;font-style:normal;color:#3c4a5b;font-family:'Liberation Sans';transform:scaleX(0.8376);transform-origin:0 0;-webkit-text-stroke:0.35px #3c4a5b">TAKES</div>
<div class="t" style="left:2430.90px;top:511.42px;font-size:21px;font-weight:bold;font-style:normal;color:#3c4a5b;font-family:'Liberation Sans';transform:scaleX(0.8979);transform-origin:0 0;-webkit-text-stroke:0.35px #3c4a5b">SHOOT</div>
<div class="t" style="left:2441.60px;top:533.82px;font-size:21px;font-weight:bold;font-style:normal;color:#3c4a5b;font-family:'Liberation Sans';transform:scaleX(0.9132);transform-origin:0 0;-webkit-text-stroke:0.35px #3c4a5b">TIME</div>
<div class="t" style="left:2436.43px;top:556.22px;font-size:21px;font-weight:bold;font-style:normal;color:#3c4a5b;font-family:'Liberation Sans';transform:scaleX(1.0696);transform-origin:0 0;-webkit-text-stroke:0.35px #3c4a5b">(MIN)</div>
<svg style="left:198px;top:501px" width="11" height="11" viewBox="0 0 11 11"><path d="M0 0h11v11z" fill="#000"/></svg>
<svg style="left:581px;top:501px" width="11" height="11" viewBox="0 0 11 11"><path d="M0 0h11v11z" fill="#000"/></svg>
<svg style="left:736px;top:501px" width="11" height="11" viewBox="0 0 11 11"><path d="M0 0h11v11z" fill="#000"/></svg>
<svg style="left:2093px;top:501px" width="11" height="11" viewBox="0 0 11 11"><path d="M0 0h11v11z" fill="#000"/></svg>
<svg style="left:2196px;top:501px" width="11" height="11" viewBox="0 0 11 11"><path d="M0 0h11v11z" fill="#000"/></svg>
<svg style="left:2299px;top:501px" width="11" height="11" viewBox="0 0 11 11"><path d="M0 0h11v11z" fill="#000"/></svg>
<svg style="left:2401px;top:501px" width="11" height="11" viewBox="0 0 11 11"><path d="M0 0h11v11z" fill="#000"/></svg>
<svg style="left:2504px;top:501px" width="11" height="11" viewBox="0 0 11 11"><path d="M0 0h11v11z" fill="#000"/></svg>
<div class="t" style="left:126.75px;top:621.38px;font-size:22px;font-weight:normal;font-style:normal;color:#5b6674;font-family:'Liberation Sans';transform:scaleX(1.2500);transform-origin:0 0;">&#10003;</div>
<div class="t" style="left:255.20px;top:620.11px;font-size:23.5px;font-weight:normal;font-style:normal;color:#556373;font-family:'Liberation Sans';">1</div>
<div class="t" style="left:360.00px;top:620.11px;font-size:23.5px;font-weight:normal;font-style:normal;color:#556373;font-family:'Liberation Sans';">1</div>
<div class="t" style="left:424.50px;top:620.11px;font-size:23.5px;font-weight:normal;font-style:normal;color:#556373;font-family:'Liberation Sans';">Stuart</div>
<div class="t" style="left:645.08px;top:620.11px;font-size:23.5px;font-weight:normal;font-style:normal;color:#556373;font-family:'Liberation Sans';transform:scaleX(0.9165);transform-origin:0 0;">CU</div>
<div class="t" style="left:781.90px;top:620.11px;font-size:23.5px;font-weight:normal;font-style:normal;color:#556373;font-family:'Liberation Sans';transform:scaleX(0.9280);transform-origin:0 0;">A CAM</div>
<div class="t" style="left:929.46px;top:620.11px;font-size:23.5px;font-weight:normal;font-style:normal;color:#556373;font-family:'Liberation Sans';transform:scaleX(0.9353);transform-origin:0 0;">Eyelevel</div>
<div class="t" style="left:1097.56px;top:620.11px;font-size:23.5px;font-weight:normal;font-style:normal;color:#556373;font-family:'Liberation Sans';transform:scaleX(0.9445);transform-origin:0 0;">Static</div>
<div class="t" style="left:1230.60px;top:620.11px;font-size:23.5px;font-weight:normal;font-style:normal;color:#556373;font-family:'Liberation Sans';">Handheld</div>
<div class="t" style="left:1399.70px;top:620.11px;font-size:23.5px;font-weight:normal;font-style:normal;color:#556373;font-family:'Liberation Sans';">28 mm</div>
<div class="t" style="left:1560.62px;top:620.11px;font-size:23.5px;font-weight:normal;font-style:normal;color:#556373;font-family:'Liberation Sans';transform:scaleX(0.9847);transform-origin:0 0;">Boom</div>
<div class="t" style="left:1684.50px;top:620.11px;font-size:23.5px;font-weight:normal;font-style:normal;color:#556373;font-family:'Liberation Sans';transform:scaleX(0.9737);transform-origin:0 0;">ddssdds</div>
<div class="t" style="left:2149.80px;top:620.11px;font-size:23.5px;font-weight:normal;font-style:normal;color:#556373;font-family:'Liberation Sans';">1</div>
<div class="t" style="left:2246.07px;top:620.11px;font-size:23.5px;font-weight:normal;font-style:normal;color:#556373;font-family:'Liberation Sans';">15</div>
<div class="t" style="left:2354.90px;top:620.11px;font-size:23.5px;font-weight:normal;font-style:normal;color:#556373;font-family:'Liberation Sans';">2</div>
<div class="t" style="left:2451.37px;top:620.11px;font-size:23.5px;font-weight:normal;font-style:normal;color:#556373;font-family:'Liberation Sans';">27</div>
<div class="t" style="left:2457.70px;top:708.61px;font-size:23.5px;font-weight:normal;font-style:normal;color:#556373;font-family:'Liberation Sans';">0</div>
<div class="t" style="left:2457.70px;top:796.11px;font-size:23.5px;font-weight:normal;font-style:normal;color:#556373;font-family:'Liberation Sans';">0</div>
<div class="t" style="left:2457.70px;top:883.61px;font-size:23.5px;font-weight:normal;font-style:normal;color:#556373;font-family:'Liberation Sans';">0</div>
<div class="t" style="left:2457.70px;top:971.61px;font-size:23.5px;font-weight:normal;font-style:normal;color:#556373;font-family:'Liberation Sans';">0</div>
<div class="t" style="left:2457.70px;top:1059.61px;font-size:23.5px;font-weight:normal;font-style:normal;color:#556373;font-family:'Liberation Sans';">0</div>
<div class="t" style="left:2457.70px;top:1147.11px;font-size:23.5px;font-weight:normal;font-style:normal;color:#556373;font-family:'Liberation Sans';">0</div>
<div class="t" style="left:2457.70px;top:1234.61px;font-size:23.5px;font-weight:normal;font-style:normal;color:#556373;font-family:'Liberation Sans';">0</div>
<svg style="left:192px;top:602px" width="13" height="8.2" viewBox="0 0 13 8.2"><path d="M0 0h13L6.5 8.2z" fill="#c0c0c0"/></svg>
<svg style="left:730px;top:602px" width="13" height="8.2" viewBox="0 0 13 8.2"><path d="M0 0h13L6.5 8.2z" fill="#c0c0c0"/></svg>
<svg style="left:885px;top:602px" width="13" height="8.2" viewBox="0 0 13 8.2"><path d="M0 0h13L6.5 8.2z" fill="#c0c0c0"/></svg>
<svg style="left:1040px;top:602px" width="13" height="8.2" viewBox="0 0 13 8.2"><path d="M0 0h13L6.5 8.2z" fill="#c0c0c0"/></svg>
<svg style="left:1195px;top:602px" width="13" height="8.2" viewBox="0 0 13 8.2"><path d="M0 0h13L6.5 8.2z" fill="#c0c0c0"/></svg>
<svg style="left:1350px;top:602px" width="13" height="8.2" viewBox="0 0 13 8.2"><path d="M0 0h13L6.5 8.2z" fill="#c0c0c0"/></svg>
<svg style="left:1505px;top:602px" width="13" height="8.2" viewBox="0 0 13 8.2"><path d="M0 0h13L6.5 8.2z" fill="#c0c0c0"/></svg>
<svg style="left:1660px;top:602px" width="13" height="8.2" viewBox="0 0 13 8.2"><path d="M0 0h13L6.5 8.2z" fill="#c0c0c0"/></svg>
<svg style="left:192px;top:690px" width="13" height="8.2" viewBox="0 0 13 8.2"><path d="M0 0h13L6.5 8.2z" fill="#c0c0c0"/></svg>
<svg style="left:730px;top:690px" width="13" height="8.2" viewBox="0 0 13 8.2"><path d="M0 0h13L6.5 8.2z" fill="#c0c0c0"/></svg>
<svg style="left:885px;top:690px" width="13" height="8.2" viewBox="0 0 13 8.2"><path d="M0 0h13L6.5 8.2z" fill="#c0c0c0"/></svg>
<svg style="left:1040px;top:690px" width="13" height="8.2" viewBox="0 0 13 8.2"><path d="M0 0h13L6.5 8.2z" fill="#c0c0c0"/></svg>
<svg style="left:1195px;top:690px" width="13" height="8.2" viewBox="0 0 13 8.2"><path d="M0 0h13L6.5 8.2z" fill="#c0c0c0"/></svg>
<svg style="left:1350px;top:690px" width="13" height="8.2" viewBox="0 0 13 8.2"><path d="M0 0h13L6.5 8.2z" fill="#c0c0c0"/></svg>
<svg style="left:1505px;top:690px" width="13" height="8.2" viewBox="0 0 13 8.2"><path d="M0 0h13L6.5 8.2z" fill="#c0c0c0"/></svg>
<svg style="left:1660px;top:690px" width="13" height="8.2" viewBox="0 0 13 8.2"><path d="M0 0h13L6.5 8.2z" fill="#c0c0c0"/></svg>
<svg style="left:192px;top:778px" width="13" height="8.2" viewBox="0 0 13 8.2"><path d="M0 0h13L6.5 8.2z" fill="#c0c0c0"/></svg>
<svg style="left:730px;top:778px" width="13" height="8.2" viewBox="0 0 13 8.2"><path d="M0 0h13L6.5 8.2z" fill="#c0c0c0"/></svg>
<svg style="left:885px;top:778px" width="13" height="8.2" viewBox="0 0 13 8.2"><path d="M0 0h13L6.5 8.2z" fill="#c0c0c0"/></svg>
<svg style="left:1040px;top:778px" width="13" height="8.2" viewBox="0 0 13 8.2"><path d="M0 0h13L6.5 8.2z" fill="#c0c0c0"/></svg>
<svg style="left:1195px;top:778px" width="13" height="8.2" viewBox="0 0 13 8.2"><path d="M0 0h13L6.5 8.2z" fill="#c0c0c0"/></svg>
<svg style="left:1350px;top:778px" width="13" height="8.2" viewBox="0 0 13 8.2"><path d="M0 0h13L6.5 8.2z" fill="#c0c0c0"/></svg>
<svg style="left:1505px;top:778px" width="13" height="8.2" viewBox="0 0 13 8.2"><path d="M0 0h13L6.5 8.2z" fill="#c0c0c0"/></svg>
<svg style="left:1660px;top:778px" width="13" height="8.2" viewBox="0 0 13 8.2"><path d="M0 0h13L6.5 8.2z" fill="#c0c0c0"/></svg>
<svg style="left:192px;top:865px" width="13" height="8.2" viewBox="0 0 13 8.2"><path d="M0 0h13L6.5 8.2z" fill="#c0c0c0"/></svg>
<svg style="left:730px;top:865px" width="13" height="8.2" viewBox="0 0 13 8.2"><path d="M0 0h13L6.5 8.2z" fill="#c0c0c0"/></svg>
<svg style="left:885px;top:865px" width="13" height="8.2" viewBox="0 0 13 8.2"><path d="M0 0h13L6.5 8.2z" fill="#c0c0c0"/></svg>
<svg style="left:1040px;top:865px" width="13" height="8.2" viewBox="0 0 13 8.2"><path d="M0 0h13L6.5 8.2z" fill="#c0c0c0"/></svg>
<svg style="left:1195px;top:865px" width="13" height="8.2" viewBox="0 0 13 8.2"><path d="M0 0h13L6.5 8.2z" fill="#c0c0c0"/></svg>
<svg style="left:1350px;top:865px" width="13" height="8.2" viewBox="0 0 13 8.2"><path d="M0 0h13L6.5 8.2z" fill="#c0c0c0"/></svg>
<svg style="left:1505px;top:865px" width="13" height="8.2" viewBox="0 0 13 8.2"><path d="M0 0h13L6.5 8.2z" fill="#c0c0c0"/></svg>
<svg style="left:1660px;top:865px" width="13" height="8.2" viewBox="0 0 13 8.2"><path d="M0 0h13L6.5 8.2z" fill="#c0c0c0"/></svg>
<svg style="left:192px;top:953px" width="13" height="8.2" viewBox="0 0 13 8.2"><path d="M0 0h13L6.5 8.2z" fill="#c0c0c0"/></svg>
<svg style="left:730px;top:953px" width="13" height="8.2" viewBox="0 0 13 8.2"><path d="M0 0h13L6.5 8.2z" fill="#c0c0c0"/></svg>
<svg style="left:885px;top:953px" width="13" height="8.2" viewBox="0 0 13 8.2"><path d="M0 0h13L6.5 8.2z" fill="#c0c0c0"/></svg>
<svg style="left:1040px;top:953px" width="13" height="8.2" viewBox="0 0 13 8.2"><path d="M0 0h13L6.5 8.2z" fill="#c0c0c0"/></svg>
<svg style="left:1195px;top:953px" width="13" height="8.2" viewBox="0 0 13 8.2"><path d="M0 0h13L6.5 8.2z" fill="#c0c0c0"/></svg>
<svg style="left:1350px;top:953px" width="13" height="8.2" viewBox="0 0 13 8.2"><path d="M0 0h13L6.5 8.2z" fill="#c0c0c0"/></svg>
<svg style="left:1505px;top:953px" width="13" height="8.2" viewBox="0 0 13 8.2"><path d="M0 0h13L6.5 8.2z" fill="#c0c0c0"/></svg>
<svg style="left:1660px;top:953px" width="13" height="8.2" viewBox="0 0 13 8.2"><path d="M0 0h13L6.5 8.2z" fill="#c0c0c0"/></svg>
<svg style="left:192px;top:1041px" width="13" height="8.2" viewBox="0 0 13 8.2"><path d="M0 0h13L6.5 8.2z" fill="#c0c0c0"/></svg>
<svg style="left:730px;top:1041px" width="13" height="8.2" viewBox="0 0 13 8.2"><path d="M0 0h13L6.5 8.2z" fill="#c0c0c0"/></svg>
<svg style="left:885px;top:1041px" width="13" height="8.2" viewBox="0 0 13 8.2"><path d="M0 0h13L6.5 8.2z" fill="#c0c0c0"/></svg>
<svg style="left:1040px;top:1041px" width="13" height="8.2" viewBox="0 0 13 8.2"><path d="M0 0h13L6.5 8.2z" fill="#c0c0c0"/></svg>
<svg style="left:1195px;top:1041px" width="13" height="8.2" viewBox="0 0 13 8.2"><path d="M0 0h13L6.5 8.2z" fill="#c0c0c0"/></svg>
<svg style="left:1350px;top:1041px" width="13" height="8.2" viewBox="0 0 13 8.2"><path d="M0 0h13L6.5 8.2z" fill="#c0c0c0"/></svg>
<svg style="left:1505px;top:1041px" width="13" height="8.2" viewBox="0 0 13 8.2"><path d="M0 0h13L6.5 8.2z" fill="#c0c0c0"/></svg>
<svg style="left:1660px;top:1041px" width="13" height="8.2" viewBox="0 0 13 8.2"><path d="M0 0h13L6.5 8.2z" fill="#c0c0c0"/></svg>
<svg style="left:192px;top:1129px" width="13" height="8.2" viewBox="0 0 13 8.2"><path d="M0 0h13L6.5 8.2z" fill="#c0c0c0"/></svg>
<svg style="left:730px;top:1129px" width="13" height="8.2" viewBox="0 0 13 8.2"><path d="M0 0h13L6.5 8.2z" fill="#c0c0c0"/></svg>
<svg style="left:885px;top:1129px" width="13" height="8.2" viewBox="0 0 13 8.2"><path d="M0 0h13L6.5 8.2z" fill="#c0c0c0"/></svg>
<svg style="left:1040px;top:1129px" width="13" height="8.2" viewBox="0 0 13 8.2"><path d="M0 0h13L6.5 8.2z" fill="#c0c0c0"/></svg>
<svg style="left:1195px;top:1129px" width="13" height="8.2" viewBox="0 0 13 8.2"><path d="M0 0h13L6.5 8.2z" fill="#c0c0c0"/></svg>
<svg style="left:1350px;top:1129px" width="13" height="8.2" viewBox="0 0 13 8.2"><path d="M0 0h13L6.5 8.2z" fill="#c0c0c0"/></svg>
<svg style="left:1505px;top:1129px" width="13" height="8.2" viewBox="0 0 13 8.2"><path d="M0 0h13L6.5 8.2z" fill="#c0c0c0"/></svg>
<svg style="left:1660px;top:1129px" width="13" height="8.2" viewBox="0 0 13 8.2"><path d="M0 0h13L6.5 8.2z" fill="#c0c0c0"/></svg>
<svg style="left:192px;top:1216px" width="13" height="8.2" viewBox="0 0 13 8.2"><path d="M0 0h13L6.5 8.2z" fill="#c0c0c0"/></svg>
<svg style="left:730px;top:1216px" width="13" height="8.2" viewBox="0 0 13 8.2"><path d="M0 0h13L6.5 8.2z" fill="#c0c0c0"/></svg>
<svg style="left:885px;top:1216px" width="13" height="8.2" viewBox="0 0 13 8.2"><path d="M0 0h13L6.5 8.2z" fill="#c0c0c0"/></svg>
<svg style="left:1040px;top:1216px" width="13" height="8.2" viewBox="0 0 13 8.2"><path d="M0 0h13L6.5 8.2z" fill="#c0c0c0"/></svg>
<svg style="left:1195px;top:1216px" width="13" height="8.2" viewBox="0 0 13 8.2"><path d="M0 0h13L6.5 8.2z" fill="#c0c0c0"/></svg>
<svg style="left:1350px;top:1216px" width="13" height="8.2" viewBox="0 0 13 8.2"><path d="M0 0h13L6.5 8.2z" fill="#c0c0c0"/></svg>
<svg style="left:1505px;top:1216px" width="13" height="8.2" viewBox="0 0 13 8.2"><path d="M0 0h13L6.5 8.2z" fill="#c0c0c0"/></svg>
<svg style="left:1660px;top:1216px" width="13" height="8.2" viewBox="0 0 13 8.2"><path d="M0 0h13L6.5 8.2z" fill="#c0c0c0"/></svg>
<div class="t" style="left:142.80px;top:1321.42px;font-size:21px;font-weight:bold;font-style:normal;color:#3c4a5b;font-family:'Liberation Sans';transform:scaleX(0.8629);transform-origin:0 0;-webkit-text-stroke:0.35px #3c4a5b">SCENE NOTES:</div>
<div class="t" style="left:1970.00px;top:1320.18px;font-size:22px;font-weight:bold;font-style:normal;color:#3c4a5b;font-family:'Liberation Sans';transform:scaleX(0.9594);transform-origin:0 0;-webkit-text-stroke:0.35px #3c4a5b">TOTAL SHOOT TIME FOR SCENE (HOURS):</div>
<div class="t" style="left:2446.02px;top:1318.99px;font-size:26px;font-weight:bold;font-style:normal;color:#3c4a5b;font-family:'Liberation Sans';transform:scaleX(0.9803);transform-origin:0 0;-webkit-text-stroke:0.3px #3c4a5b">0.5</div>
<div style="left:2538px;top:346px;width:22px;height:1050px;background:#f8f8f8"></div>
<div style="left:2538px;top:346px;width:1px;height:1050px;background:#e2e2e2"></div>
<div style="left:2541px;top:348px;width:17px;height:303px;background:#c4c4c4;border-radius:1px"></div>
<div style="left:2539px;top:1315px;width:21px;height:1px;background:#dedede"></div>
<div style="left:2539px;top:1344px;width:21px;height:1px;background:#dedede"></div>
<svg style="left:2544px;top:1326px" width="10" height="6" viewBox="0 0 10 6"><path d="M0 6h10L5 0z" fill="#a8a8a8"/></svg>
<svg style="left:2544px;top:1355px" width="10" height="6" viewBox="0 0 10 6"><path d="M0 0h10L5 6z" fill="#a8a8a8"/></svg>
<div style="left:0px;top:1396px;width:2560px;height:73px;background:#ececec"></div>
<div style="left:0px;top:1396px;width:2560px;height:2px;background:#b3b3b3"></div>
<svg style="left:94px;top:1418px" width="21" height="21" viewBox="0 0 21 21"><g fill="#5c5c5c"><rect x="8.6" y="0.5" width="3.4" height="19.4"/><rect x="0.5" y="8.5" width="19.4" height="3.4"/></g></svg>
<svg style="left:151px;top:1418px" width="23" height="22" viewBox="0 0 23 22"><g fill="#5c5c5c"><rect y="1" width="22.6" height="3"/><rect y="6.5" width="22.6" height="3"/><rect y="12" width="22.6" height="3"/><rect y="17.5" width="22.6" height="3"/></g></svg>
<div style="left:217.5px;top:1396px;width:254px;height:53px;background:#fff;border:1px solid #c2c2c2;border-top:none;box-shadow:0 1px 1px rgba(0,0,0,.12)"></div>
<div class="t" style="left:230.49px;top:1407.28px;font-size:24px;font-weight:normal;font-style:normal;color:#222;font-family:'Liberation Sans';transform:scaleX(1.0097);transform-origin:0 0;">Shot List Template</div>
<svg style="left:445.5px;top:1416.5px" width="11.5" height="8.3" viewBox="0 0 11.5 8.3"><path d="M0 0h11.5L5.75 8.3z" fill="#a8a8a8"/></svg>
<div style="left:473.7px;top:1397px;width:246px;height:53.5px;background:#e6e6e1;border:1px solid #cfcfcf;border-top:none"></div>
<div class="t" style="left:488.80px;top:1409.18px;font-size:24px;font-weight:normal;font-style:normal;color:#666;font-family:'Liberation Sans';transform:scaleX(1.0045);transform-origin:0 0;">Template Options</div>
<svg style="left:693.7px;top:1418.5px" width="11.5" height="8.3" viewBox="0 0 11.5 8.3"><path d="M0 0h11.5L5.75 8.3z" fill="#a8a8a8"/></svg>
<svg style="left:2503.5px;top:1414.5px" width="35" height="39" viewBox="0 0 35 39"><path d="M3 0h28a3 3 0 0 1 3 3v28a3 3 0 0 1-3 3H21l-3.5 4.5L14 34H3a3 3 0 0 1-3-3V3a3 3 0 0 1 3-3z" fill="#c8c8c8"/><path d="M17 7l2.6 7.8 7.8 2.6-7.8 2.6L17 27.8l-2.6-7.8-7.8-2.6 7.8-2.6z" fill="#fff"/></svg>
</body></html>
